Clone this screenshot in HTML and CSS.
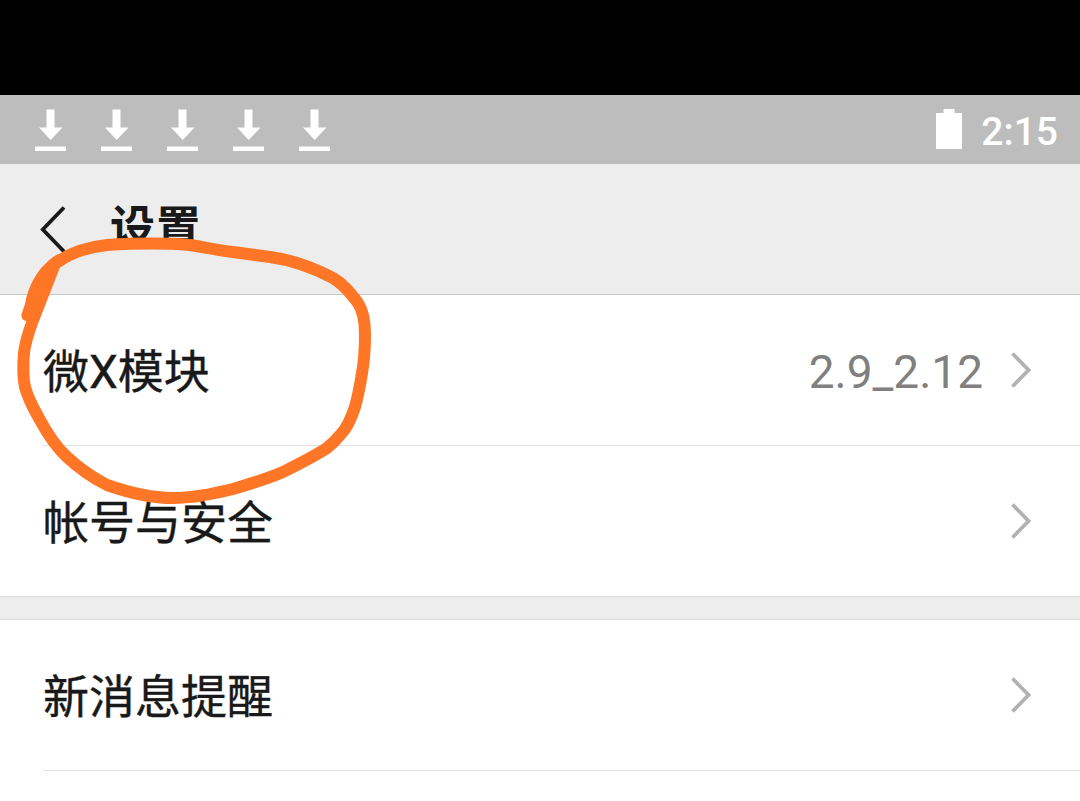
FILE: index.html
```html
<!DOCTYPE html>
<html lang="zh-CN">
<head>
    <meta charset="UTF-8">
    <meta name="viewport" content="width=device-width, initial-scale=1.0">
    <title>设置</title>
    <link rel="stylesheet" href="styles.css">
</head>
<body>
    <svg class="symbols" width="0" height="0">
        <symbol id="download" viewBox="0 0 31 42">
            <path d="M11.500 0.500h8v18h8L15.700 31 4 18.500h7.500zM0 37.500h31V42H0z" fill="#fff"/>
        </symbol>
        <symbol id="arrow" viewBox="0 0 20 36">
            <path d="M1.500 1.500L17.500 18 1.500 34.500" fill="none" stroke="#b2b2b2" stroke-width="3.800"/>
        </symbol>
    </svg>

    <div class="screen">
        <div class="cutout"></div>

        <!-- 状态栏 -->
        <div class="status-bar">
            <div class="downloads">
                <svg><use href="#download"/></svg>
                <svg><use href="#download"/></svg>
                <svg><use href="#download"/></svg>
                <svg><use href="#download"/></svg>
                <svg><use href="#download"/></svg>
            </div>
            <svg class="battery" viewBox="0 0 26 40"><path d="M7.500 0h11v4H26v36H0V4h7.500z" fill="#fff"/></svg>
            <span class="time">2:15</span>
        </div>

        <!-- 标题栏 -->
        <header class="header">
            <svg class="back" viewBox="0 0 26 48"><path d="M24 2.500L2.800 24.500 24 46.500" fill="none" stroke="#191919" stroke-width="3.800"/></svg>
            <h1>设置</h1>
        </header>

        <ul class="list">
            <li class="row">
                <span class="label">微X模块</span>
                <span class="value">2.9_2.12</span>
                <svg class="arrow"><use href="#arrow"/></svg>
            </li>
            <li class="row last">
                <span class="label">帐号与安全</span>
                <svg class="arrow"><use href="#arrow"/></svg>
            </li>
        </ul>

        <ul class="list">
            <li class="row">
                <span class="label">新消息提醒</span>
                <svg class="arrow"><use href="#arrow"/></svg>
            </li>
        </ul>

        <!-- 手绘圈注 -->
        <svg class="mark" viewBox="0 0 400 520">
            <path d="M56 263C70 253 88 247 107 245C133 243.500 165 243 190 245C203 247 217 250 233 252L270 257C293 260 314 268 333 278C345 285 352 295 358 303C364 312 365 323 365 335C365 350 364 362 362 373C360 386 358 396 355 407C351 419 346 429 341 434C337 439 332 444 327 448C315 456 297 465 283 472C267 479 250 484 233 489C213 494 195 498 173 498C149 498 127 492 107 485C93 478 79 468 67 457C55 446 47 433 40 420C32 406 27 395 25 387C23 378 23 365 24 353C25 343 29 331 33 320L54 266"/>
            <path class="tail" d="M58 254C48 260 40 268 35 277C29 286 26 298 25 304L21.500 314C21 318 23 321 27 321L38 322L45 303L60 266Z"/>
        </svg>
    </div>
</body>
</html>
```

FILE: styles.css
```css
body {
    margin: 0;
    background-color: #fff;
    color: #191919;
    font-family: Roboto, "Noto Sans CJK SC", sans-serif;
}

.symbols {
    display: none;
}

.screen {
    position: relative;
    height: 801px;
    overflow: hidden;
}

.cutout {
    height: 95px;
    background-color: #000;
}

/* 状态栏 */
.status-bar {
    display: flex;
    align-items: center;
    box-sizing: border-box;
    height: 69px;
    padding: 0 22px 0 35px;
    background-color: #bdbdbd;
}

.downloads {
    display: flex;
    gap: 35px;
    flex: 1;
}

.downloads svg {
    width: 31px;
    height: 42px;
}

.battery {
    width: 26px;
    height: 40px;
    margin-right: 19px;
    margin-bottom: 1px;
}

.time {
    color: #fff;
    font-size: 39px;
    font-weight: 500;
    line-height: 65px;
    padding-top: 5px;
}

/* 标题栏 */
.header {
    display: flex;
    align-items: center;
    height: 130px;
    padding-left: 40px;
    background-color: #ededed;
    border-bottom: 1px solid #c6c6c6;
}

.back {
    width: 26px;
    height: 48px;
    margin-right: 44px;
}

h1 {
    margin: 0;
    font-size: 45px;
    font-weight: 700;
    line-height: 60px;
    letter-spacing: 1px;
}

/* 设置列表 */
.list {
    margin: 0;
    padding: 0;
    list-style: none;
}

.list + .list {
    border-top: 22px solid #ededed;
    box-shadow: inset 0 1px #dedede;
    padding-top: 1px;
}

.row {
    display: flex;
    align-items: center;
    height: 150px;
    margin-left: 43px;
    padding-right: 49px;
    border-bottom: 1px solid #e0e0e0;
}

.row.last {
    margin-left: 0;
    padding-left: 43px;
}

.label {
    flex: 1;
    padding-top: 3px;
    font-size: 46px;
    line-height: 60px;
    -webkit-text-stroke: 0.4px #191919;
}

.value {
    margin-right: 28px;
    padding-top: 4px;
    color: #808080;
    font-size: 46px;
    line-height: 60px;
}

.arrow {
    width: 20px;
    height: 36px;
}

/* 圈注盖在列表上方 */
.mark {
    position: absolute;
    top: 0;
    left: 0;
    width: 400px;
    height: 520px;
    fill: none;
    stroke: #ff7627;
    stroke-width: 12px;
    stroke-linecap: round;
    stroke-linejoin: round;
}

.mark .tail {
    fill: #ff7627;
    stroke: none;
}
```
